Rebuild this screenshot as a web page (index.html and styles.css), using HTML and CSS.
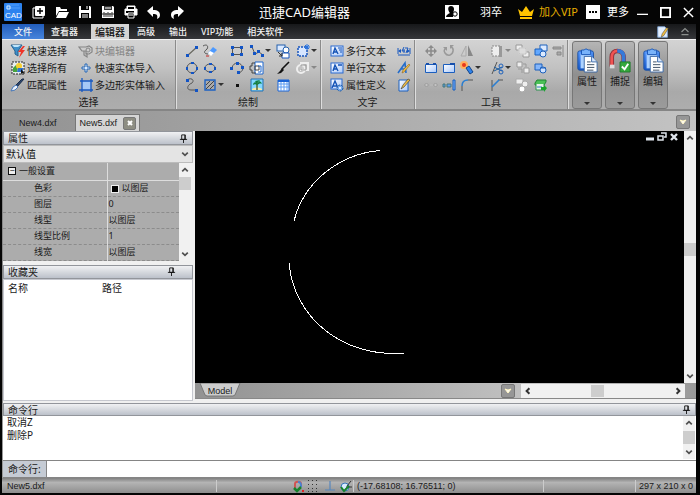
FILE: index.html
```html
<!DOCTYPE html>
<html lang="zh-CN">
<head>
<meta charset="utf-8">
<title>迅捷CAD编辑器</title>
<link rel="stylesheet" href="styles.css">
</head>
<body>
<svg class="defs" aria-hidden="true">
<defs>
<linearGradient id="g-blue" x1="0" y1="0" x2="0" y2="1"><stop offset="0" stop-color="#5a9bff"/><stop offset="1" stop-color="#1456c8"/></linearGradient>
<linearGradient id="g-pale" x1="0" y1="0" x2="1" y2="1"><stop offset="0" stop-color="#fff"/><stop offset="1" stop-color="#a9c8fa"/></linearGradient>
</defs>
<symbol id="new" viewBox="0 0 16 16"><path d="M4 4H2v10h10v-2" fill="none" stroke="#fff"/><rect x="4" y="2" width="10" height="10" rx="1" fill="#fff"/><path d="M9 4v6M6 7h6" stroke="#000" stroke-width="1.4"/></symbol>
<symbol id="open" viewBox="0 0 16 16"><path d="M2 12V3h4l1 2h6v2H5z" fill="#fff"/><path d="M5 8h10l-3 6H2z" fill="#fff"/></symbol>
<symbol id="save" viewBox="0 0 16 16"><path d="M2 2h11l1 1v11H2z" fill="#fff"/><path d="M4 2h8v4H4zM4 9h8v5H4z" fill="#000"/><path d="M5 11h6M5 13h6M10 2v3" stroke="#fff"/></symbol>
<symbol id="saveas" viewBox="0 0 16 16"><path d="M2 2h11l1 1v11H2z" fill="#fff"/><path d="M4 2h8v4H4z" fill="#333"/><path d="M5 4h6" stroke="#fff"/><path d="M4 8v5M6 9v4M8 8v5M10 9v4M12 8v5M2 10h12" stroke="#333"/></symbol>
<symbol id="print" viewBox="0 0 16 16"><path d="M4 5V2h8v3M2 5h12v6H2z" fill="#fff" stroke="#fff"/><path d="M5 3h6v2H5zM3 7h8v2H3z" fill="#000"/><path d="M5 9h6v5H5z" fill="#000" stroke="#fff"/><path d="M6 11h4" stroke="#fff"/></symbol>
<symbol id="undo" viewBox="0 0 16 16"><path d="M7 2v4c5 0 7 2 7 5 0 2-1 3-3 4 1-4 0-5-4-5v3L1 7z" fill="#fff"/></symbol>
<symbol id="redo" viewBox="0 0 16 16"><path d="M9 2v4C4 6 2 8 2 11c0 2 1 3 3 4-1-4 0-5 4-5v3l6-6z" fill="#fff"/></symbol>
<symbol id="user" viewBox="0 0 16 16"><path d="M1 1h14v14H1z" fill="#fff"/><path d="M7 2c-4 0-3 5-1 7-2 1-4 2-4 4h7V9c2-4 1-7-2-7z" fill="#000"/><circle cx="11" cy="10" r="2.2" fill="#fff" stroke="#000"/></symbol>
<symbol id="crown" viewBox="0 0 18 16"><path d="M1 5l4 3 4-6 4 6 4-3-2 7H3zM3 13h12v2H3z" fill="#ffc400"/></symbol>
<symbol id="filter" viewBox="0 0 16 16"><path d="M1 2h11L8 8v5l-3-2V8z" fill="#3e8fc9" stroke="#28618f"/><path d="M2 2h9l-3 2H4z" fill="#bfe5fa"/><path d="M13 3l-5 6h3l-2 6 6-8h-3l3-4z" fill="#ef3328"/></symbol>
<symbol id="selall" viewBox="0 0 16 16"><path d="M2 2h12v12H2z" fill="#e8edf0" stroke="#222" stroke-dasharray="2 1"/><path d="M3 8l3-3 2 3-1 4H3z" fill="#46a33d"/><circle cx="9" cy="6" r="3" fill="#f7ce2e"/><path d="M8 8h5v4H7z" fill="#3475cf"/><path d="M11 9l4 5-3-1-1 2z" fill="#111"/></symbol>
<symbol id="brush" viewBox="0 0 16 16"><path d="M14 2l-7 8-2-1 7-7z" fill="#2c4770" stroke="#1b2c48"/><path d="M6 8l2 2-3 3-4 1 2-4z" fill="#e9f2ff" stroke="#4878b8"/></symbol>
<symbol id="blockedit" viewBox="0 0 16 16"><path d="M1 4h7l3-1 3 2v4l-3 2H8V8H4zM6 8v4l3 2v-4" fill="none" stroke="#858585" stroke-width="1.2"/><circle cx="10" cy="7" r="2" fill="#ccc" stroke="#858585"/></symbol>
<symbol id="plus" viewBox="0 0 16 16"><path d="M7 4h2v3h3v2H9v3H7V9H4V7h3z" fill="#dcecff" stroke="#2766b3"/></symbol>
<symbol id="poly" viewBox="0 0 16 16"><path d="M4 4h9v9H4z" fill="#a5c8f6"/><path d="M4 1v14M1 13h14M13 2v13M2 4h13" stroke="#1858c0" stroke-width="1.3"/></symbol>
<symbol id="line" viewBox="0 0 16 16"><path d="M3 13L13 4" stroke="#686860" stroke-width="1.2"/><path d="M2 11h3v3H2zM11 3h3v3h-3z" fill="#1254c5"/></symbol>
<symbol id="erase" viewBox="0 0 16 16"><path d="M1 3c5-3 6 2 3 4s-1 4 2 4" fill="none" stroke="#555"/><path d="M6 10l5-6 4 3-5 5z" fill="#4c99ff"/><path d="M6 10l2-2 4 2-3 3z" fill="#fff"/><path d="M4 13h3" stroke="#c42222"/></symbol>
<symbol id="rect" viewBox="0 0 16 16"><path d="M3.5 4.5h9v7h-9z" fill="none" stroke="#555"/><path d="M2 3h3v3H2zM11 3h3v3h-3zM2 10h3v3H2zM11 10h3v3h-3z" fill="#1254c5"/></symbol>
<symbol id="pline" viewBox="0 0 16 16"><path d="M3 4l3 7 4-2 4 3" fill="none" stroke="#555"/><path d="M1 2h3v3H1zM4 9h3v3H4zM8 7h3v3H8zM12 11h3v3h-3z" fill="#1254c5"/></symbol>
<symbol id="blocks" viewBox="0 0 16 16"><rect x="2" y="2" width="8" height="6" fill="#dceaff" stroke="#2560ad"/><circle cx="11" cy="7" r="3" fill="#fff" stroke="#2560ad"/><path d="M7 10h7v5H7z" fill="#fff" stroke="#1856bd"/><path d="M3 9l4 4M4 13h3v-3" fill="none" stroke="#333"/></symbol>
<symbol id="blockmake" viewBox="0 0 16 16"><path d="M3 4h9v9H3z" fill="#d7e6ff" stroke="#1856bd" stroke-width="1.5" stroke-dasharray="2 1"/><path d="M12 1v6M9 4h6M10 2l4 4M14 2l-4 4" stroke="#2773e1"/></symbol>
<symbol id="circle" viewBox="0 0 16 16"><circle cx="8" cy="8" r="5" fill="none" stroke="#555"/><path d="M7 2h3v2H7zM7 12h3v2H7zM2 7h2v3H2zM12 7h2v3h-2z" fill="#1254c5"/></symbol>
<symbol id="ellipse" viewBox="0 0 16 16"><ellipse cx="8" cy="8" rx="5" ry="4" fill="none" stroke="#555"/><path d="M7 3h3v2H7zM7 11h3v2H7zM2 7h2v3H2zM12 7h2v3h-2z" fill="#1254c5"/></symbol>
<symbol id="arc" viewBox="0 0 16 16"><path d="M3 8c1-7 10-6 11 0 0 3-3 5-5 5" fill="none" stroke="#555"/><path d="M1 7h3v3H1zM7 2h3v3H7zM12 6h3v3h-3zM8 11h3v3H8z" fill="#1254c5"/></symbol>
<symbol id="cloud" viewBox="0 0 16 16"><path d="M6 2h8v12H6z" fill="#fff" stroke="#1d66ce"/><path d="M6 3H3v3H1v4h2v3h4M6 6h4v4H6z" fill="none" stroke="#444"/><path d="M9 6h3v6H9" fill="none" stroke="#1d66ce"/></symbol>
<symbol id="paint" viewBox="0 0 16 16"><path d="M14 2L7 9" stroke="#111" stroke-width="1.6"/><path d="M7 8l2 2-3 3-4 1 3-3z" fill="#111"/></symbol>
<symbol id="region" viewBox="0 0 16 16"><path d="M6 3h7v7H6z" fill="#ccc" stroke="#eee" stroke-width="2"/><circle cx="6" cy="9" r="4" fill="none" stroke="#eee" stroke-width="2"/><path d="M6 5h5v5H6z" fill="none" stroke="#999"/></symbol>
<symbol id="spline" viewBox="0 0 16 16"><path d="M3 3c4-3 8 0 5 3-5 2-6 7-1 7h5" fill="none" stroke="#555"/><path d="M2 2h3v3H2zM11 12h3v3h-3z" fill="#1254c5"/></symbol>
<symbol id="hatch" viewBox="0 0 16 16"><path d="M3 3h10v10H3z" fill="#aaa" stroke="#1d62c4" stroke-width="1.4"/><path d="M4 8l4-4M4 12l8-8M8 12l4-4" stroke="#444"/></symbol>
<symbol id="point" viewBox="0 0 16 16"><path d="M7 7h3v3H7z" fill="#111"/></symbol>
<symbol id="image" viewBox="0 0 16 16"><path d="M2 2h12v12H2z" fill="#83d8ff" stroke="#2272b4"/><path d="M3 12c3-2 7-2 10 0v1H3z" fill="#f5ebad"/><path d="M8 5v8" stroke="#563" stroke-width="1.5"/><path d="M4 8c0-3 3-4 4-1 1-4 4-3 5 0-2-1-3 0-5 1-1-1-3-1-4 0zM6 4l2 3 3-4" fill="#138042"/></symbol>
<symbol id="table" viewBox="0 0 16 16"><path d="M3 3h11v11H3z" fill="#fff" stroke="#1b64d6"/><path d="M3 4h11" stroke="#1b64d6" stroke-width="2"/><path d="M6 5v9M9 5v9M12 5v9M3 7h11M3 10h11" stroke="#5d9cf3"/></symbol>
<symbol id="mtext" viewBox="0 0 16 16"><rect x="2" y="3" width="12" height="10" fill="url(#g-pale)" stroke="#2a6bd1"/><path d="M4 11l2-6 3 6M5 9h3" fill="none" stroke="#1453b6" stroke-width="1.4"/><path d="M9 5h4M10 7h3M11 9h2" stroke="#1453b6"/></symbol>
<symbol id="stext" viewBox="0 0 16 16"><rect x="2" y="3" width="12" height="10" fill="url(#g-pale)" stroke="#2a6bd1"/><path d="M4 11l2-6 3 6M5 9h3M9 5h4" fill="none" stroke="#1453b6" stroke-width="1.4"/></symbol>
<symbol id="attr" viewBox="0 0 16 16"><rect x="2" y="2" width="11" height="10" fill="url(#g-pale)" stroke="#2a6bd1"/><path d="M3 11l3-7 3 7M4 9h4" fill="none" stroke="#1453b6" stroke-width="1.4"/><circle cx="11" cy="11" r="3" fill="#75a9ed" stroke="#19569e" stroke-dasharray="2 1"/><circle cx="11" cy="11" r="1" fill="#fff"/></symbol>
<symbol id="dim" viewBox="0 0 16 16"><path d="M2 5v6M14 5v6M2 12h12" stroke="#1858c0"/><path d="M2 8l3-2v4zM14 8l-3-2v4z" fill="#1858c0"/><path d="M8 4L6 8h3M8 6v4M9 5h3l-2 5" fill="none" stroke="#1858c0"/></symbol>
<symbol id="style" viewBox="0 0 16 16"><path d="M2 13L9 3l1 10M5 9h5" fill="none" stroke="#246cca" stroke-width="1.6"/><path d="M14 5l-6 7-2 1 1-3 6-6z" fill="#eebc42" stroke="#865b12" stroke-width=".5"/></symbol>
<symbol id="editdoc" viewBox="0 0 16 16"><path d="M3 3h9v11H3z" fill="url(#g-pale)" stroke="#1c60be"/><path d="M14 3l-6 7-3 2 2-4 5-6z" fill="#eebc42" stroke="#333" stroke-width=".6"/></symbol>
<symbol id="move" viewBox="0 0 16 16"><path d="M8 4v8M4 8h8" stroke="#8b8b8b" stroke-width="1.5"/><path d="M8 2l3 3H5zM8 14l3-3H5zM2 8l3-3v6zM14 8l-3-3v6z" fill="#8b8b8b"/></symbol>
<symbol id="rotate" viewBox="0 0 16 16"><path d="M5 5C1 8 5 13 9 12c4-2 4-7 1-8" fill="none" stroke="#999" stroke-width="1.5"/><path d="M2 4h4v4zM9 2h4L9 6z" fill="#999"/></symbol>
<symbol id="mirror" viewBox="0 0 16 16"><path d="M7 3v10H2z" fill="#ccc" stroke="#aaa"/><path d="M9 2v11h5z" fill="#888"/></symbol>
<symbol id="gblock" viewBox="0 0 16 16"><path d="M3 3h8v10H3z" fill="#eee" stroke="#888" stroke-dasharray="2 1"/><path d="M10 3h3v11h-3z" fill="#999"/></symbol>
<symbol id="gcopy" viewBox="0 0 16 16"><path d="M2 2h6v5H2zM9 9h6v5H9z" fill="#eee" stroke="#999"/><path d="M5 5h7v6H5z" fill="#ddd" stroke="#fff"/><path d="M5 5h7v6H5z" fill="none" stroke="#999" stroke-width=".6"/></symbol>
<symbol id="arrange" viewBox="0 0 16 16"><path d="M7 2h7v6H7z" fill="#dceaff" stroke="#1d61bd"/><path d="M2 6h7v6H2z" fill="#62a8ff" stroke="#1d61bd"/><circle cx="10" cy="11" r="3" fill="#dceaff" stroke="#1d61bd"/></symbol>
<symbol id="align" viewBox="0 0 16 16"><path d="M13 2v12" stroke="#888"/><path d="M3 4h8v2H3zM7 9h4v3H7z" fill="#aaa" stroke="#888"/></symbol>
<symbol id="stretch" viewBox="0 0 16 16"><path d="M2.5 4.5h11v8h-11z" fill="url(#g-pale)" stroke="#1b5ebe"/><path d="M3 3h3v2H3zM10 3h3v2h-3z" fill="#174fab"/></symbol>
<symbol id="scale" viewBox="0 0 16 16"><path d="M2.5 4.5h11v8h-11z" fill="url(#g-pale)" stroke="#1b5ebe"/><path d="M9 3h5v2H9z" fill="#174fab"/></symbol>
<symbol id="explode" viewBox="0 0 16 16"><circle cx="5" cy="5" r="4" fill="#ffb15e"/><circle cx="5" cy="5" r="2" fill="#e8371d"/><path d="M7 8l3-2 4 6-3 2z" fill="#2e82e9" stroke="#14458b"/></symbol>
<symbol id="trim" viewBox="0 0 16 16"><path d="M3 14L8 2" stroke="#555"/><path d="M5 7l8 4M5 11l8-4" stroke="#17599e"/><circle cx="12" cy="6" r="2" fill="none" stroke="#1d61bd"/><circle cx="12" cy="12" r="2" fill="none" stroke="#1d61bd"/></symbol>
<symbol id="gshape" viewBox="0 0 16 16"><path d="M3 2h5v5H3zM10 8h5v5h-5z" fill="#eee" stroke="#999"/><path d="M4 9h4v4M9 4h3v3" fill="none" stroke="#999"/></symbol>
<symbol id="join" viewBox="0 0 16 16"><path d="M2 4h7v6H2z" fill="#85b6fa" stroke="#1d61bd"/><circle cx="10" cy="10" r="3" fill="#cfe2ff" stroke="#1d61bd"/><path d="M7 8h6" stroke="#1d61bd"/></symbol>
<symbol id="break" viewBox="0 0 16 16"><path d="M2 7h3v2H2zM11 7h3v2h-3z" fill="#eee" stroke="#999"/><path d="M7 8h3" stroke="#bbb"/></symbol>
<symbol id="extend" viewBox="0 0 16 16"><path d="M12 3h2v10h-2z" fill="#7fb6ff" stroke="#155dbd"/><path d="M2 7h2v3H2zM6 7h4v3H6z" fill="#5a9ef6" stroke="#477"/></symbol>
<symbol id="fillet" viewBox="0 0 16 16"><path d="M3 14V9M9 3h5" stroke="#555"/><path d="M3 9c0-4 2-6 6-6" fill="none" stroke="#2b7ed0" stroke-width="1.5"/></symbol>
<symbol id="chamfer" viewBox="0 0 16 16"><path d="M3 14V3M9 3h5" stroke="#555"/><path d="M3 10l7-7" stroke="#2b7ed0" stroke-width="1.6"/></symbol>
<symbol id="groups" viewBox="0 0 16 16"><path d="M2 2h7v5H2z" fill="#eee" stroke="#aaa"/><circle cx="11" cy="7" r="3" fill="#eee" stroke="#aaa"/><circle cx="8" cy="12" r="3" fill="#fff" stroke="#aaa"/></symbol>
<symbol id="layer" viewBox="0 0 16 16"><path d="M2 6l2-3h9v2l-2 3H2z" fill="#4bc157" stroke="#228335"/><path d="M3 7v6h8V7" fill="#e5f5e7" stroke="#2d9450"/><path d="M4 10h5" stroke="#3274c5"/><path d="M8 10h3V8l3 3-3 4v-2H8z" fill="#19a52b"/></symbol>
<symbol id="clip" viewBox="0 0 24 28"><rect x="2" y="3" width="17" height="21" rx="2" fill="url(#g-blue)" stroke="#164da0"/><path d="M5 6h11v16H5z" fill="#acd2ff"/><path d="M6 2h3l1-1h2l1 1h3v5H6z" fill="#79b3fa" stroke="#1754b4"/><path d="M9 9h8l6 6v11H9z" fill="#fff" stroke="#3866a5"/><path d="M17 9v6h6" fill="#d6e6fc" stroke="#3866a5"/><path d="M12 15h4M12 18h8M12 21h8M12 24h7" stroke="#32455c"/></symbol>
<symbol id="magnet" viewBox="0 0 24 28"><path d="M3 20V10c0-5 3-7 6-7s7 2 7 7v8" fill="none" stroke="#8f3138" stroke-width="5"/><path d="M3 19V10c0-5 3-7 6-7" fill="none" stroke="#f05452" stroke-width="3"/><path d="M9 3c4 0 7 2 7 7v8" fill="none" stroke="#3579d9" stroke-width="4"/><path d="M1 18h5v4H1z" fill="#ddd"/><path d="M12 15h11v11H12z" fill="#35a93d" stroke="#207a2b"/><path d="M14 20l3 3 4-6" fill="none" stroke="#fff" stroke-width="2"/></symbol>
<symbol id="pin" viewBox="0 0 10 10"><path d="M3 1h4v5H3zM1 6h8M5 6v4" fill="none" stroke="#111"/><path d="M6 1h1v5H6z" fill="#111"/></symbol>
<symbol id="up" viewBox="0 0 10 10"><path d="M3 6l2-2 2 2" fill="none" stroke="#505050" stroke-width="1.2"/></symbol>
<symbol id="down" viewBox="0 0 10 10"><path d="M3 4l2 2 2-2" fill="none" stroke="#505050" stroke-width="1.2"/></symbol>
<symbol id="left" viewBox="0 0 10 10"><path d="M6 3L4 5l2 2" fill="none" stroke="#333" stroke-width="1.4"/></symbol>
<symbol id="right" viewBox="0 0 10 10"><path d="M4 3l2 2-2 2" fill="none" stroke="#333" stroke-width="1.4"/></symbol>
<symbol id="chev" viewBox="0 0 12 12"><path d="M3 4l3 4 3-4-3 1z" fill="#fff" stroke="#fff5c4"/></symbol>
</svg>

<div class="app">
  <header class="titlebar">
    <svg class="logo" viewBox="0 0 18 18" role="img" aria-label="CAD"><rect width="18" height="18" rx="1" fill="#2c83ef"/><path d="M2 2h13M2 5h14" stroke="#6bb0ff" stroke-width=".6"/><path d="M3 3h3v3H3z" fill="none" stroke="#d5edff"/><text x="1" y="15" class="logo-text">CAD</text></svg>
    <div class="quick">
      <button aria-label="新建"><svg><use href="#new"/></svg></button>
      <button aria-label="打开"><svg><use href="#open"/></svg></button>
      <button aria-label="保存"><svg><use href="#save"/></svg></button>
      <button aria-label="另存为"><svg><use href="#saveas"/></svg></button>
      <button aria-label="打印"><svg><use href="#print"/></svg></button>
      <button aria-label="撤销"><svg><use href="#undo"/></svg></button>
      <button aria-label="重做"><svg><use href="#redo"/></svg></button>
    </div>
    <h1>迅捷CAD编辑器</h1>
    <div class="account">
      <button class="who"><svg><use href="#user"/></svg>羽卒</button>
      <button class="vip"><svg><use href="#crown"/></svg>加入VIP</button>
      <button class="more"><svg viewBox="0 0 14 14"><path d="M0 0h14v14H0z" fill="#fff"/><path d="M3 6h2v2H3zM6 6h2v2H6zM9 6h2v2H9z" fill="#000"/></svg>更多</button>
    </div>
    <div class="winbtns">
      <button aria-label="最小化"><svg viewBox="0 0 12 12"><path d="M0 8h12" stroke="#fff" stroke-width="1.4"/></svg></button>
      <button aria-label="最大化"><svg viewBox="0 0 12 12"><path d="M1 1h10v10H1z" fill="none" stroke="#fff" stroke-width="2"/></svg></button>
      <button aria-label="关闭"><svg viewBox="0 0 12 12"><path d="M1 1l10 10M11 1L1 11" stroke="#fff" stroke-width="1.6"/></svg></button>
    </div>
  </header>

  <nav class="menu">
    <button class="file">文件</button>
    <button>查看器</button>
    <button class="on">编辑器</button>
    <button>高级</button>
    <button>输出</button>
    <button>VIP功能</button>
    <button>相关软件</button>
    <span class="menu-end">
      <button aria-label="样式"><svg viewBox="0 0 16 16"><path d="M2 2h8l3 3v9H2z" fill="#e4f0ff" stroke="#7fa6d8"/><path d="M14 4l-5 8-3 2 1-4 5-7z" fill="#eebc42" stroke="#444" stroke-width=".6"/></svg></button>
      <button aria-label="折叠功能区"><svg viewBox="0 0 16 16"><path d="M4 8l4-4 4 4M4 11h8" fill="none" stroke="#8b8f8d" stroke-width="1.4"/></svg></button>
    </span>
  </nav>

  <section class="ribbon">
    <div class="group g-select">
      <div class="tools">
        <button class="cmd"><svg><use href="#filter"/></svg>快速选择</button>
        <button class="cmd" disabled><svg><use href="#blockedit"/></svg>块编辑器</button>
        <button class="cmd"><svg><use href="#selall"/></svg>选择所有</button>
        <button class="cmd"><svg><use href="#plus"/></svg>快速实体导入</button>
        <button class="cmd"><svg><use href="#brush"/></svg>匹配属性</button>
        <button class="cmd"><svg><use href="#poly"/></svg>多边形实体输入</button>
      </div>
      <h2>选择</h2>
    </div>
    <div class="group g-draw">
      <div class="tools">
        <button aria-label="直线"><svg><use href="#line"/></svg></button>
        <button aria-label="徒手画"><svg><use href="#erase"/></svg></button>
        <button aria-label="矩形"><svg><use href="#rect"/></svg></button>
        <button aria-label="多段线" class="drop"><svg><use href="#pline"/></svg></button>
        <button aria-label="插入块"><svg><use href="#blocks"/></svg></button>
        <button aria-label="创建块" class="drop"><svg><use href="#blockmake"/></svg></button>
        <button aria-label="圆"><svg><use href="#circle"/></svg></button>
        <button aria-label="椭圆"><svg><use href="#ellipse"/></svg></button>
        <button aria-label="圆弧"><svg><use href="#arc"/></svg></button>
        <button aria-label="云线"><svg><use href="#cloud"/></svg></button>
        <button aria-label="画笔"><svg><use href="#paint"/></svg></button>
        <button aria-label="面域" class="drop" disabled><svg><use href="#region"/></svg></button>
        <button aria-label="样条"><svg><use href="#spline"/></svg></button>
        <button aria-label="填充" class="drop"><svg><use href="#hatch"/></svg></button>
        <button aria-label="点"><svg><use href="#point"/></svg></button>
        <button aria-label="图像"><svg><use href="#image"/></svg></button>
        <button aria-label="表格"><svg><use href="#table"/></svg></button>
      </div>
      <h2>绘制</h2>
    </div>
    <div class="group g-text">
      <div class="tools">
        <button class="cmd"><svg><use href="#mtext"/></svg>多行文本</button>
        <button aria-label="标注"><svg><use href="#dim"/></svg></button>
        <button class="cmd"><svg><use href="#stext"/></svg>单行文本</button>
        <button aria-label="文字样式"><svg><use href="#style"/></svg></button>
        <button class="cmd"><svg><use href="#attr"/></svg>属性定义</button>
        <button aria-label="编辑文字"><svg><use href="#editdoc"/></svg></button>
      </div>
      <h2>文字</h2>
    </div>
    <div class="group g-tools">
      <div class="tools">
        <button aria-label="移动" disabled><svg><use href="#move"/></svg></button>
        <button aria-label="旋转" disabled><svg><use href="#rotate"/></svg></button>
        <button aria-label="镜像" disabled><svg><use href="#mirror"/></svg></button>
        <button aria-label="阵列" class="drop" disabled><svg><use href="#gblock"/></svg></button>
        <button aria-label="复制" disabled><svg><use href="#gcopy"/></svg></button>
        <button aria-label="排列"><svg><use href="#arrange"/></svg></button>
        <button aria-label="对齐" disabled><svg><use href="#align"/></svg></button>
        <button aria-label="拉伸"><svg><use href="#stretch"/></svg></button>
        <button aria-label="缩放"><svg><use href="#scale"/></svg></button>
        <button aria-label="分解" class="drop"><svg><use href="#explode"/></svg></button>
        <button aria-label="修剪" class="drop"><svg><use href="#trim"/></svg></button>
        <button aria-label="顺序" disabled><svg><use href="#gshape"/></svg></button>
        <button aria-label="合并"><svg><use href="#join"/></svg></button>
        <span></span>
        <button aria-label="打断" disabled><svg><use href="#break"/></svg></button>
        <button aria-label="延伸"><svg><use href="#extend"/></svg></button>
        <button aria-label="圆角"><svg><use href="#fillet"/></svg></button>
        <button aria-label="倒角"><svg><use href="#chamfer"/></svg></button>
        <button aria-label="编组" disabled><svg><use href="#groups"/></svg></button>
        <button aria-label="图层"><svg><use href="#layer"/></svg></button>
      </div>
      <h2>工具</h2>
    </div>
    <div class="bigs">
      <button><svg><use href="#clip"/></svg>属性<i></i></button>
      <button><svg><use href="#magnet"/></svg>捕捉<i></i></button>
      <button><svg><use href="#clip"/></svg>编辑<i></i></button>
    </div>
  </section>

  <div class="doctabs">
    <button class="doc">New4.dxf</button>
    <div class="doc active"><button>New5.dxf</button><button class="x" aria-label="关闭"><svg viewBox="0 0 8 8"><path d="M2 2l4 4M6 2L2 6" stroke="#fff" stroke-width="2"/></svg></button></div>
    <button class="dd" aria-label="标签列表"><svg><use href="#chev"/></svg></button>
  </div>

  <main class="work">
    <aside class="side">
      <section class="props">
        <h3 class="bar">属性<svg><use href="#pin"/></svg></h3>
        <div class="combo">
          <select aria-label="默认值"><option>默认值</option></select>
          <svg><use href="#down"/></svg>
        </div>
        <div class="proplist">
          <table>
            <tr class="head"><th><button aria-label="收起">−</button>一般设置</th><td></td></tr>
            <tr><th>色彩</th><td><b></b>以图层</td></tr>
            <tr><th>图层</th><td>0</td></tr>
            <tr><th>线型</th><td>以图层</td></tr>
            <tr><th>线型比例</th><td>1</td></tr>
            <tr><th>线宽</th><td>以图层</td></tr>
          </table>
          <div class="vscroll near"><svg><use href="#up"/></svg><i></i><svg class="last"><use href="#down"/></svg></div>
        </div>
      </section>
      <section class="favs">
        <h3 class="bar">收藏夹<svg><use href="#pin"/></svg></h3>
        <div class="favlist"><span>名称</span><span>路径</span></div>
      </section>
    </aside>
    <section class="view">
      <div class="stage">
        <div class="canvas">
          <svg class="drawing" viewBox="0 0 489 252" preserveAspectRatio="xMinYMin meet"><path d="M185 19.5C145 23 109 50 99 90M94 132C99 188 149 227 209 222" fill="none" stroke="#fff" shape-rendering="crispEdges"/></svg>
          <div class="mdi">
            <button aria-label="最小化"><svg viewBox="0 0 10 10"><path d="M1 7h8" stroke="#dfe5ec" stroke-width="3"/></svg></button>
            <button aria-label="还原"><svg viewBox="0 0 10 10"><path d="M4 1h5v4H7M1 4h5v4H1z" fill="none" stroke="#dfe5ec" stroke-width="1.5"/></svg></button>
            <button aria-label="关闭"><svg viewBox="0 0 10 10"><path d="M2 2l6 6M8 2L2 8" stroke="#dfe5ec" stroke-width="2.4"/></svg></button>
          </div>
        </div>
        <div class="vscroll mid"><svg><use href="#up"/></svg><i></i><svg><use href="#down"/></svg></div>
      </div>
      <div class="modelbar">
        <button class="model"><svg viewBox="0 0 42 15" preserveAspectRatio="none"><path d="M1 0l5 12 2 1h26l2-1 5-12z" fill="#cdcdcd" stroke="#777"/></svg><span>Model</span></button>
        <button class="dd" aria-label="布局列表"><svg><use href="#chev"/></svg></button>
        <div class="hscroll"><svg><use href="#left"/></svg><i></i><svg><use href="#right"/></svg></div>
      </div>
    </section>
  </main>

  <section class="command">
    <h3 class="bar">命令行<svg><use href="#pin"/></svg></h3>
    <div class="history">
      <p>取消Z<br>删除P</p>
      <div class="vscroll hist"><svg><use href="#up"/></svg><i></i><svg><use href="#down"/></svg></div>
    </div>
    <div class="entry"><label for="cmd">命令行:</label><input id="cmd" type="text"></div>
  </section>

  <footer class="status">
    <span class="name">New5.dxf</span>
    <span class="cell"></span>
    <div class="toggles">
      <button aria-label="捕捉"><svg viewBox="0 0 14 14"><path d="M4 9V5c0-3 6-3 6 0v3" fill="none" stroke="#d15454" stroke-width="2"/><path d="M7 3c3 0 3 2 3 5" fill="none" stroke="#4a83d0" stroke-width="2"/><path d="M3 9l3 3 4-4" fill="none" stroke="#15832b" stroke-width="2.5"/><path d="M11 11h2v2h-2z" fill="#e32222"/></svg></button>
      <button aria-label="栅格"><svg viewBox="0 0 14 14"><path d="M1 1.5h12M1 5.5h12M1 9.5h12M1 12.5h12" stroke="#333" stroke-dasharray="1 3" shape-rendering="crispEdges"/></svg></button>
      <button aria-label="正交"><svg viewBox="0 0 14 14"><path d="M7 2v9M2 11h10" stroke="#5787bd" stroke-width="1.2"/></svg></button>
      <button aria-label="对象捕捉"><svg viewBox="0 0 14 14"><circle cx="6" cy="8" r="4" fill="#d8ebff" stroke="#3977b9"/><path d="M7 8h6M8 7l4-5" stroke="#333"/><path d="M2 8l3 4 5-5" fill="none" stroke="#15832b" stroke-width="2"/></svg></button>
    </div>
    <span class="cell">(-17.68108; 16.76511; 0)</span>
    <span class="cell"></span>
    <span class="cell">297 x 210 x 0</span>
  </footer>
</div>
</body>
</html>
```

FILE: styles.css
```css
* { box-sizing: border-box; }

body {
  margin: 0;
  background: #050505;
  color: #1a1a1a;
  font: 10px/12px "Noto Sans", "Noto Sans CJK SC", sans-serif;
}

button {
  display: flex;
  align-items: center;
  margin: 0;
  padding: 0;
  border: 0;
  background: none;
  color: inherit;
  font: inherit;
  white-space: nowrap;
}

h1, h2, h3, p { margin: 0; font-weight: normal; }
svg { display: block; flex: none; }
.defs { position: absolute; width: 0; height: 0; }

.app {
  display: flex;
  flex-direction: column;
  min-height: 100vh;
  padding: 0 4px 2px 2px;
}

/* title bar */
.titlebar {
  display: flex;
  align-items: center;
  height: 24px;
  padding-left: 2px;
  color: #fff;
  font-size: 11px;
}
.logo { width: 18px; height: 18px; }
.logo-text { fill: #fff; font: 8px "Liberation Sans", sans-serif; }
.quick { display: flex; gap: 7px; padding-left: 9px; }
.quick svg, .who svg { width: 16px; height: 16px; }
.titlebar h1 { flex: 1; padding: 0 8px 0 74px; font-size: 13px; line-height: 24px; }
.account { display: flex; }
.who { gap: 20px; }
.vip { gap: 4px; margin-left: 15px; color: #e5ae00; }
.vip svg { width: 18px; height: 16px; }
.more { gap: 7px; margin-left: 8px; }
.more svg { width: 14px; height: 14px; }
.winbtns { display: flex; gap: 12px; padding: 0 2px 0 8px; }
.winbtns svg { width: 11px; height: 11px; }

/* menu tabs */
.menu {
  display: flex;
  height: 15px;
  background: linear-gradient(#17181a, #36373a);
  color: #f2f2f2;
  font-size: 9px;
  font-weight: 500;
}
.menu button { padding: 0 7px; }
.menu .file { justify-content: center; width: 42px; padding: 0; background: linear-gradient(#225dbb, #4684dc); font-size: 9px; }
.menu .on { margin: 0 1px 0 6px; padding: 0 4px; background: #d4d4d4; color: #111; font-size: 10px; }
.menu .menu-end { display: flex; margin-left: auto; }
.menu .menu-end button { padding: 0 4px; }
.menu-end svg { width: 14px; height: 14px; }

/* ribbon */
.ribbon {
  display: flex;
  height: 72px;
  border-top: 1px solid #f0f0f0;
  border-bottom: 2px solid #858585;
  background: linear-gradient(#d3d3d3, #c2c2c2 40%, #a9a9a9 75%, #adadad);
}
.group {
  display: flex;
  flex-direction: column;
  border-right: 1px solid #8b8b8b;
  box-shadow: 1px 0 #dedede;
}
.group h2 { margin-top: auto; font-size: 10px; line-height: 14px; text-align: center; }
.tools { display: grid; grid-auto-rows: 17px; padding: 2px 0 0 8px; }
.tools svg { width: 16px; height: 16px; }
.tools button:disabled { color: #858585; }
.cmd { gap: 1px; }
.drop::after, .bigs i {
  width: 0;
  height: 0;
  border: 3px solid transparent;
  border-top-color: #333;
  border-bottom: 0;
  content: "";
}
.drop:disabled::after { border-top-color: #888; }
.g-select { width: 174px; }
.g-select .tools { grid-template-columns: 68px 1fr; }
.g-draw { width: 145px; }
.g-draw .tools { grid-template-columns: 18px 27px 20px 26px 20px 24px; }
.g-text { width: 94px; }
.g-text .tools { grid-template-columns: 67px 1fr; }
.g-tools { width: 153px; }
.g-tools .tools { grid-template-columns: 18px 18px 30px 25px 19px 17px 16px; }
.bigs { display: flex; gap: 3px; padding: 1px 4px 0; }
.bigs button {
  flex-direction: column;
  width: 30px;
  border: 1px solid #777;
  border-radius: 3px;
  background: linear-gradient(#b5b5b5, #8f8f8f 50%, #9b9b9b);
}
.bigs svg { width: 22px; height: 26px; margin: 6px 0 1px; }
.bigs i { margin: auto 0 3px; }

/* document tabs */
.doctabs, .modelbar, .status { font-family: "Liberation Sans", "Noto Sans", sans-serif; font-size: 9px; }
.doctabs {
  display: flex;
  align-items: flex-end;
  height: 20px;
  padding: 0 6px 0 11px;
  background: linear-gradient(90deg, #929292, #c3c3c3);
}
.doc { height: 17px; padding: 0 6px; }
.doc.active {
  display: flex;
  align-items: center;
  gap: 6px;
  margin-left: 12px;
  padding: 0 3px 0 4px;
  border: 1px solid #777;
  border-bottom: 0;
  background: #d5d5d5;
}
.x, .dd { justify-content: center; border: 1px solid #777; border-radius: 2px; background: #8d8d82; }
.x { width: 13px; height: 13px; }
.x svg { width: 8px; height: 8px; }
.dd { width: 14px; height: 14px; background: #969696; }
.dd svg { width: 12px; height: 12px; }
.doctabs .dd { margin: 0 0 2px auto; }

/* side panels */
.work { display: flex; flex: 1; min-height: 260px; background: #f0f0f0; }
.side { display: flex; flex-direction: column; width: 193px; padding-right: 2px; border-left: 1px solid #888; }
.bar {
  display: flex;
  align-items: center;
  justify-content: space-between;
  height: 14px;
  padding: 0 4px;
  border: 1px solid #92959b;
  background: linear-gradient(#f0f1f3, #bcc1ca);
  font-size: 10px;
}
.bar svg { width: 9px; height: 9px; }
.combo { display: flex; align-items: center; height: 18px; border: 1px solid #bbb; background: #e4e4e4; }
.combo select { flex: 1; padding: 0 2px; border: 0; appearance: none; background: none; color: #111; font: inherit; }
.combo svg { width: 14px; height: 14px; }
.proplist { display: flex; padding-right: 2px; font-size: 9px; }
.proplist table { flex: 1; border-collapse: collapse; table-layout: fixed; background: #acacac; }
.proplist th, .proplist td { height: 16px; padding: 0 0 0 1px; border-bottom: 1px dashed #8c8c8c; font-weight: normal; line-height: 14px; text-align: left; }
.proplist th { width: 104px; padding-left: 31px; border-right: 1px solid #ddd; }
.proplist .head th { padding-left: 5px; }
.proplist .head th, .proplist .head td { height: 17px; border-bottom: 1px solid #ddd; }
.proplist th button { display: inline-flex; justify-content: center; width: 8px; height: 8px; margin-right: 3px; border: 1px solid #111; background: #eee; line-height: 6px; }
.proplist b { display: inline-block; width: 8px; height: 8px; margin: 0 3px 0 2px; border: 1px solid #eee; background: #000; vertical-align: middle; }

.vscroll { display: flex; flex-direction: column; align-items: center; justify-content: space-between; width: 12px; background: #f1f1f1; }
.vscroll svg, .hscroll svg { width: 14px; height: 14px; }
.vscroll i { width: 100%; height: 13px; background: #cdcdcd; }
.near { justify-content: flex-start; }
.near .last { margin-top: auto; }
.mid i { margin-bottom: 16px; }

.favs { display: flex; flex: 1; flex-direction: column; padding: 4px 0 2px; }
.favs .bar { padding-right: 16px; }
.favlist { display: grid; grid-template-columns: 94px 1fr; flex: 1; padding: 2px 4px; border: 1px solid #c6c8cf; background: #fff; }

/* drawing view */
.view { display: flex; flex: 1; flex-direction: column; }
.stage { display: flex; flex: 1; }
.canvas { position: relative; flex: 1; background: #000; }
.drawing { position: absolute; inset: 0; width: 100%; height: 100%; }
.mdi { position: absolute; top: 1px; right: 5px; display: flex; gap: 2px; }
.mdi svg { width: 10px; height: 10px; }
.modelbar { display: flex; align-items: center; height: 16px; margin-bottom: 4px; padding: 0 11px 0 4px; border-bottom: 1px solid #888; background: linear-gradient(90deg, #929292, #c4c4c4 70%, #999); }
.model { position: relative; justify-content: center; width: 42px; height: 15px; }
.model svg { position: absolute; inset: 0; width: 100%; height: 100%; }
.model span { position: relative; }
.modelbar .dd { margin-left: auto; }
.hscroll { display: flex; align-items: center; justify-content: space-between; width: 164px; height: 14px; margin-left: 6px; background: #f1f1f1; }
.hscroll i { width: 13px; height: 12px; margin-right: 11px; background: #cdcdcd; }

/* command line */
.command { border-left: 1px solid #999; background: #fff; }
.command .bar { height: 13px; }
.history { display: flex; justify-content: space-between; height: 44px; padding: 0 1px 1px 4px; line-height: 13px; }
.entry { display: flex; height: 18px; border: solid #858585; border-width: 1px 0; }
.entry label { width: 44px; padding: 0 5px; border-right: 1px solid #858585; background: #c5cbd4; line-height: 16px; }
.entry input { flex: 1; min-width: 0; padding: 0 4px; border: 0; outline: 0; font: inherit; }

/* status bar */
.status {
  display: grid;
  grid-template-columns: 214fr 75fr max-content 190fr 92fr 61fr;
  align-items: center;
  height: 15px;
  background: linear-gradient(#808080, #b4b4b4 30%, #8e8e8e);
  white-space: nowrap;
}
.name { padding-left: 5px; }
.toggles { display: flex; gap: 2px; }
.toggles svg { width: 14px; height: 14px; }
.cell { min-height: 12px; padding-left: 3px; border-left: 1px solid #ccc; }
```
